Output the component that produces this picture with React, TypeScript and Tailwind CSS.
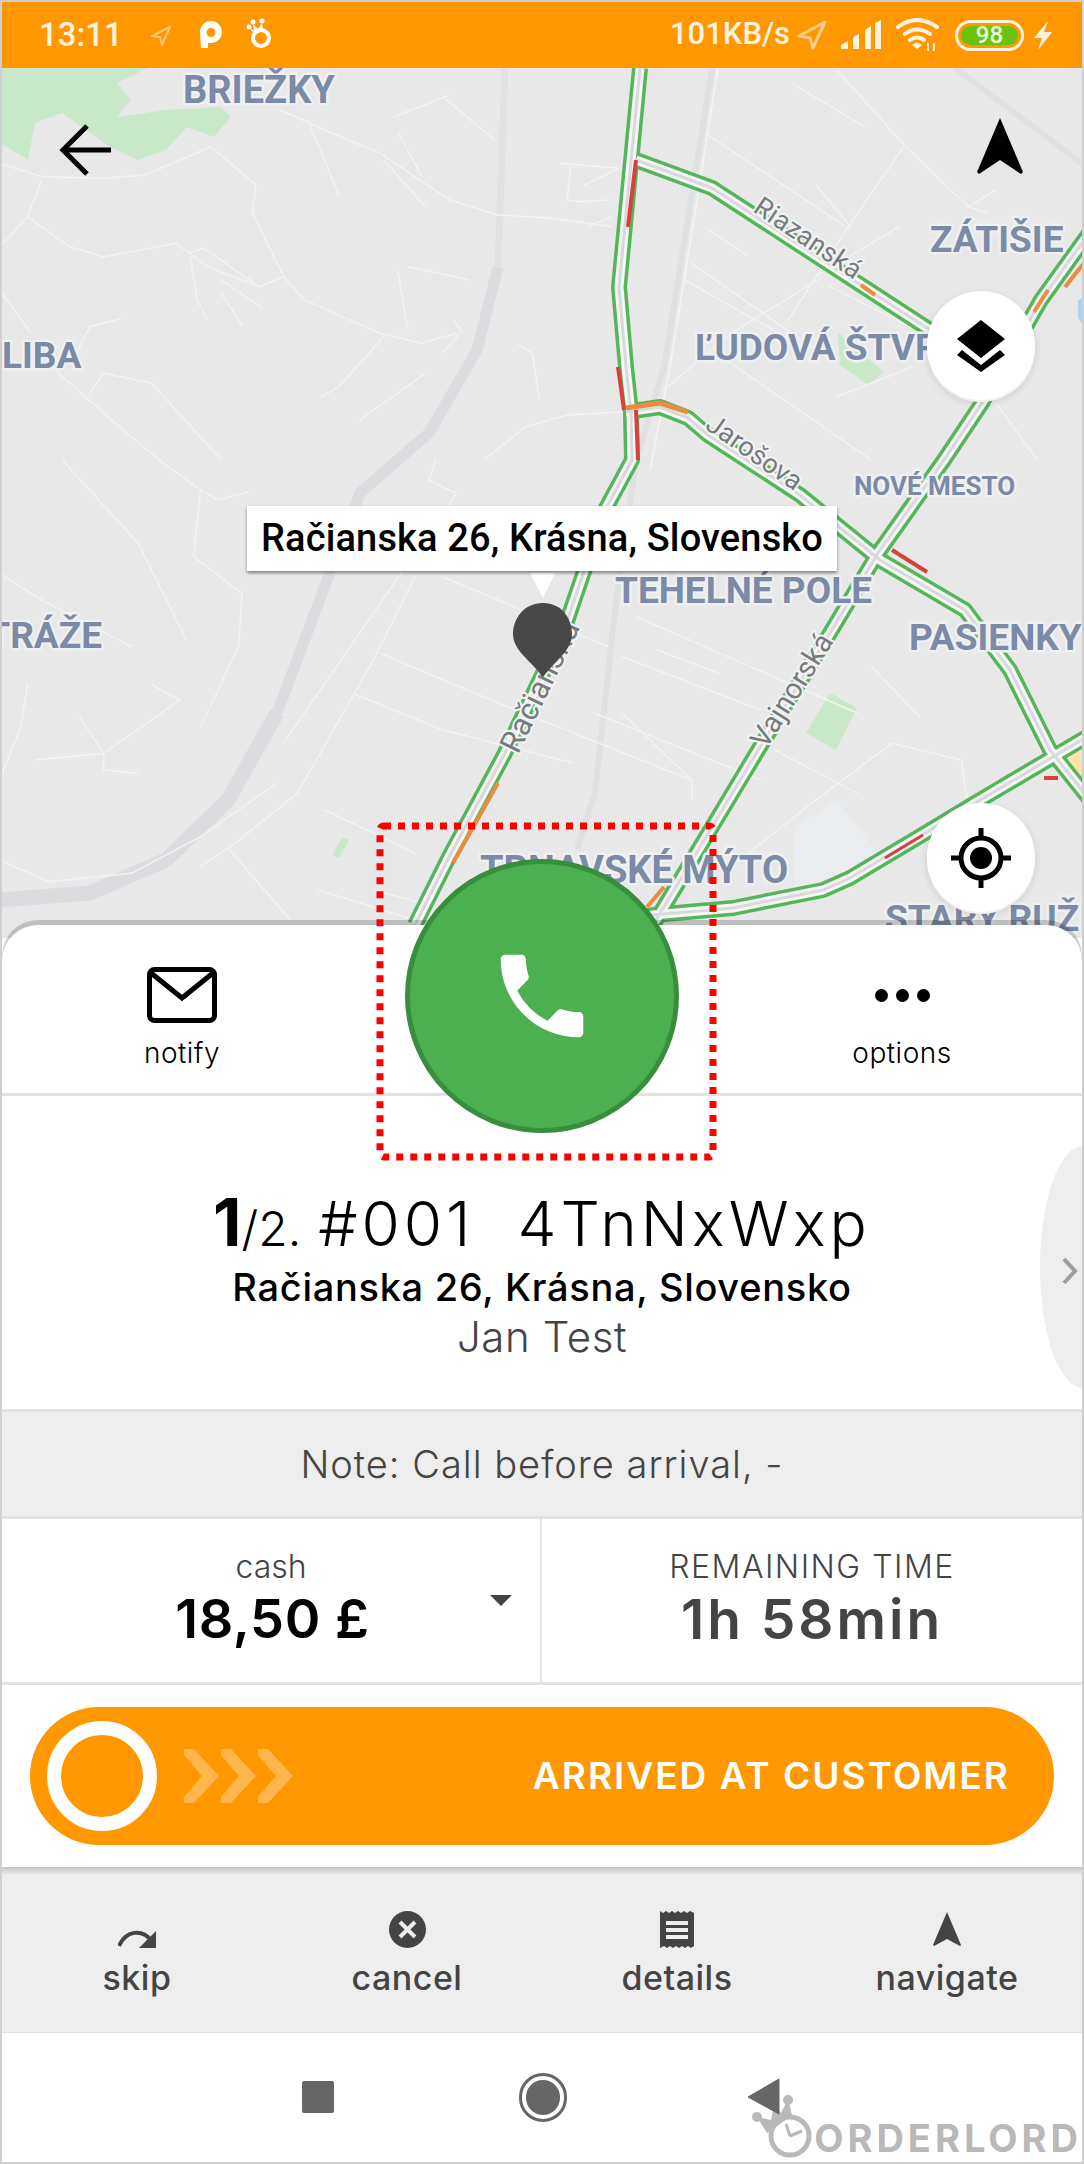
import React from "react";

type P = [number, number];
const z1 = (a: P[]) => a.map(([x, y]) => `${(x / 1.446).toFixed(1)},${(y / 3).toFixed(1)}`).join(" ");
const z2 = (a: P[]) => a.map(([x, y]) => `${(x / 1.446).toFixed(1)},${(460 + y / 3).toFixed(1)}`).join(" ");

const white1: P[][] = [
  [[405,330],[470,390],[550,460],[610,545],[650,600],[720,645],[800,655],[885,680]],
  [[445,360],[490,585]],[[575,395],[610,530]],[[555,480],[615,620]],[[650,285],[570,350]],[[640,290],[715,420]],
  [[810,490],[895,505]],[[895,505],[845,555]],[[825,500],[820,600],[840,605],[880,600]],[[885,650],[850,680]],
  [[305,440],[370,555],[365,640],[410,830],[440,900],[550,1000],[610,1030],[660,1000]],
  [[305,440],[210,525],[150,535],[60,530],[0,490]],
  [[40,650],[100,740],[150,770],[255,730],[300,800],[375,860],[410,830]],
  [[270,760],[295,745],[375,860]],[[275,770],[285,900],[300,960]],[[320,840],[380,925]],[[320,880],[350,975]],
  [[40,650],[0,740]],[[60,540],[40,650]],[[0,870],[45,1000]],[[175,955],[130,980],[110,1060]],
  [[80,1110],[150,1240],[230,1380]],[[150,1120],[220,1150],[250,1220],[320,1380]],[[150,1120],[130,1180]],
  [[555,1010],[490,1160],[465,1190]],[[665,1000],[640,1060]],[[655,960],[670,1000]],[[575,810],[590,990]],[[590,800],[680,840]],
  [[750,1035],[770,1060],[780,1200]],[[615,1120],[520,1260]],[[905,1235],[820,1245],[760,1280],[700,1380]],
  [[1210,210],[1310,440],[1400,620]],[[1020,400],[1230,690]],[[1025,690],[1080,765]],[[1145,250],[1250,380]],
  [[1305,445],[1220,700],[1140,960]],[[1180,555],[1230,680]],[[1000,790],[1200,1080]],[[990,840],[1170,1050]],
  [[1190,830],[1050,1010],[960,1170]],[[1050,1080],[1260,1380]],[[1440,1210],[1500,1380]],[[1200,860],[1430,1100]],
  [[1300,680],[1180,830]],[[1440,570],[1400,620],[1430,640]],[[1320,1100],[1210,1190]],
];
const white2: P[][] = [
  [[230,0],[290,90],[280,290],[350,400],[345,560],[290,800]],[[90,0],[200,250],[270,540]],[[0,340],[60,420],[190,560]],
  [[315,120],[360,95]],[[290,90],[315,120]],[[660,100],[620,60],[630,0]],[[660,100],[520,520],[410,850]],
  [[600,350],[540,600],[430,1000],[340,1150],[290,1220]],[[510,700],[640,810],[830,910]],[[550,580],[710,720],[1000,960]],
  [[640,350],[880,560]],[[920,470],[1240,760]],[[860,760],[1100,960]],[[950,570],[1040,640]],[[900,590],[1100,750]],
  [[40,670],[30,800],[0,960]],[[115,770],[150,880],[50,900]],[[220,675],[260,720],[150,880]],[[150,880],[150,930],[200,940]],
  [[0,1200],[70,1265],[190,1240],[290,1130],[400,970]],[[330,1165],[420,1380]],[[470,1050],[600,1180]],[[540,1290],[610,1330]],
  [[460,1290],[600,1380]],[[1070,1200],[1180,1020],[1290,850],[1390,900],[1400,1040]],[[1120,870],[1240,1000]],
  [[900,760],[1000,960],[1000,1020]],[[1260,620],[1330,770]],
];

const roads = [
  "640,68 619,287 626,367 631,413 632,460 605,510 565,627 505,753 449,857 415,925",
  "636,160 712,188 930,330",
  "1090,232 1041,300 982,403 944,460 878,553 830,633 760,747 712,827 653,925",
  "626,412 660,407 688,418 708,435 800,495 880,560 965,610 1010,670 1050,750 1090,800",
  "600,925 653,915 733,908 823,890 850,878 927,832 975,803 1090,735",
];
const segs: [string, string, number][] = [
  ["636,160 628,227", "#d8403a", 4],["618,367 624,410", "#d8403a", 4],["636,410 638,460", "#d8403a", 4],
  ["498,783 453,863", "#e98c3f", 4],["664,887 647,907", "#e98c3f", 4],["626,408 660,403 688,412", "#e98c3f", 5],
  ["861,285 875,295", "#e98c3f", 4],["1048,290 1034,312", "#e98c3f", 4],["1084,263 1065,287", "#e98c3f", 4],
  ["892,550 927,572", "#d8403a", 4],["1044,778 1058,778", "#d8403a", 4],["885,858 923,835", "#d8403a", 3],
];

const Place = ({ x, y, s = 37, a, children }: { x: number; y: number; s?: number; a?: "end"; children: string }) => (
  <text x={x} y={y} fontSize={s} textAnchor={a} className="font-bold" fill="#7b8aa5" stroke="#f0f0f2" strokeWidth={5} strokeLinejoin="round" paintOrder="stroke" style={{ fontFamily: "Roboto, sans-serif" }}>
    {children}
  </text>
);
const Street = ({ x, y, r, s = 27, children }: { x: number; y: number; r: number; s?: number; children: string }) => (
  <text transform={`translate(${x} ${y}) rotate(${r})`} fontSize={s} fill="#767b80" stroke="#f3f3f3" strokeWidth={4} strokeLinejoin="round" paintOrder="stroke" style={{ fontFamily: "Roboto, sans-serif" }}>
    {children}
  </text>
);

function MapCanvas() {
  return (
    <svg viewBox="0 68 1084 870" className="absolute left-[-2px] top-0 w-[1084px] h-[870px]">
      <rect x="0" y="68" width="1084" height="870" fill="#e8e8e8" />
      <polygon points="0,68 148,68 117,83 131,100 117,117 166,110 221,107 231,117 214,137 187,127 166,150 138,160 110,147 62,113 35,123 28,160 0,143" fill="#c9e8c9" />
      <polygon points="838,333 884,372 868,385 840,365" fill="#c9e8c9" />
      <polygon points="830,693 857,708 836,750 806,733" fill="#c9e8c9" />
      <polygon points="342,837 349,840 339,858 332,855" fill="#c9e8c9" />
      <polygon points="795,827 837,800 878,853 850,890 795,890" fill="#e9edf0" />
      <polygon points="1078,300 1084,298 1084,326 1078,318" fill="#a9d3f0" />
      <polyline points="505,68 498,267" fill="none" stroke="#e0e1e3" strokeWidth="7" />
      <polyline points="498,267 477,350 429,433 360,493 277,713" fill="none" stroke="#dadcdf" strokeWidth="11" />
      <polyline points="277,713 228,800 166,860 90,893 0,900" fill="none" stroke="#dadcdf" strokeWidth="15" />
      <polyline points="712,68 691,200 664,367 636,460 615,610 595,793 577,850" fill="none" stroke="#dfe0e2" strokeWidth="6" />
      <polyline points="955,68 1084,165" fill="none" stroke="#dfe0e2" strokeWidth="6" />
      <polyline points="718,68 697,200 670,367 650,470" fill="none" stroke="#f5f5f5" strokeWidth="1.5" />
      {white1.map((p, i) => <polyline key={i} points={z1(p)} fill="none" stroke="#f3f3f3" strokeWidth="1.5" />)}
      {white2.map((p, i) => <polyline key={i} points={z2(p)} fill="none" stroke="#f3f3f3" strokeWidth="1.5" />)}
      <polyline points="1072,745 1084,790" fill="none" stroke="#fbe4a6" strokeWidth="10" />
      {roads.map((r, i) => <polyline key={i} points={r} fill="none" stroke="#55b55a" strokeWidth="16" strokeLinejoin="round" />)}
      {roads.map((r, i) => <polyline key={i} points={r} fill="none" stroke="#f6f6f6" strokeWidth="9" strokeLinejoin="round" />)}
      {roads.map((r, i) => <polyline key={i} points={r} fill="none" stroke="#d8d9db" strokeWidth="3" strokeLinejoin="round" />)}
      {segs.map(([p, c, w], i) => <polyline key={i} points={p} fill="none" stroke={c} strokeWidth={w} />)}
      <Place x={183} y={103} s={38}>BRIEŽKY</Place>
      <Place x={930} y={252}>ZÁTIŠIE</Place>
      <Place x={695} y={360}>ĽUDOVÁ ŠTVRŤ</Place>
      <Place x={2} y={368}>LIBA</Place>
      <Place x={102} y={648} a="end">TRÁŽE</Place>
      <Place x={615} y={603}>TEHELNÉ POLE</Place>
      <Place x={909} y={650}>PASIENKY</Place>
      <Place x={854} y={495} s={26}>NOVÉ MESTO</Place>
      <Place x={480} y={883} s={38}>TRNAVSKÉ MÝTO</Place>
      <Place x={885} y={931}>STARÝ RUŽINOV</Place>
      <Street x={752} y={211} r={34}>Riazanská</Street>
      <Street x={704} y={428} r={35}>Jarošova</Street>
      <Street x={766} y={750} r={-58} s={29}>Vajnorská</Street>
      <Street x={518} y={755} r={-64} s={31}>Račianska</Street>
      <path d="M530 573 L555 573 L543 598 Z" fill="#fff" />
      <path d="M543 603 C563 603 572 620 572 634 C572 650 556 660 543 677 C530 660 513 650 513 634 C513 620 523 603 543 603 Z" fill="#484848" />
    </svg>
  );
}

const Glow = "bg-white rounded-full w-[108px] h-[109px] flex items-center justify-center shadow-[0_2px_0_#f1f1f1,0_3px_8px_rgba(0,0,0,0.12)]";

export default function App() {
  const mont = { fontFamily: "Inter, 'Noto Sans', sans-serif" };
  return (
    <div className="relative w-[1084px] h-[2164px] border-2 border-[#cfcfcf] bg-white overflow-hidden box-border" style={mont}>
      {/* status bar */}
      <div className="relative z-10 h-[66px] bg-[#ff9800] flex items-center text-[#fff3e0] pl-[37px]" style={{ fontFamily: "Roboto, sans-serif" }}>
        <span className="text-[33px] font-medium w-[100px] mt-[-1px]">13:11</span>
        <svg width="20" height="20" viewBox="0 0 20 20" className="ml-[12px] mt-[2px]"><path d="M19 1 L1 10 L9 11 L11 19 Z" fill="none" stroke="#ffc675" strokeWidth="2" strokeLinejoin="round" /></svg>
        <svg width="24" height="28" viewBox="0 0 24 28" className="ml-[28px]"><path fillRule="evenodd" d="M1 11 A11 11 0 1 1 12 22 L9 22 L9 27 L2 27 Z M12 7 A4.5 4.5 0 1 0 12.01 16 A4.5 4.5 0 0 0 12 7 Z" fill="#fff" /></svg>
        <svg width="28" height="30" viewBox="0 0 28 30" className="ml-[23px] mt-[-4px]"><circle cx="15" cy="20" r="8" fill="none" stroke="#fff" strokeWidth="4" /><path d="M3 9 L8 13 L7 6 L12 11 L16 5 L17 12 L9 17 Z" fill="#fff" /><circle cx="3" cy="9" r="2.5" fill="#fff" /><circle cx="7" cy="4" r="2.5" fill="#fff" /><circle cx="16" cy="3" r="2.5" fill="#fff" /></svg>
        <span className="ml-auto text-[31px] font-medium w-[127px] mt-[-1px]">101KB/s</span>
        <svg width="30" height="30" viewBox="0 0 30 30"><path d="M28 2 L2 16 L13 18 L16 28 Z" fill="none" stroke="#ffcf8c" strokeWidth="3" strokeLinejoin="round" /></svg>
        <svg width="40" height="30" viewBox="0 0 40 30" className="ml-[14px]"><path d="M0 29 L0 25 L7 21 L7 29 Z M12 29 L12 17 L18 14 L18 29 Z M24 29 L24 10 L30 6 L30 29 Z M34 29 L34 3 L40 0 L40 29 Z" fill="#fff3e0" /></svg>
        <svg width="44" height="34" viewBox="0 0 44 34" className="ml-[15px]"><path d="M2 9 Q21 -5 41 9 M9 16 Q21 7 34 16 M14 22 Q21 17 28 22" fill="none" stroke="#fff3e0" strokeWidth="4" strokeLinecap="round" /><path d="M16 27 L21 24 L26 27 L21 31 Z" fill="#fff3e0" /><path d="M32 33 L32 25 M38 33 L38 25" stroke="#fff3e0" strokeWidth="2" /></svg>
        <div className="ml-[15px] w-[69px] h-[31px] rounded-full border-[3px] border-[#fff3e0] p-[3px] flex">
          <div className="flex-1 rounded-full bg-[#6cc10f] flex items-center justify-center text-[24px] leading-none font-medium text-[#eaffd9]">98</div>
        </div>
        <svg width="20" height="29" viewBox="0 0 20 29" className="ml-[9px] mr-[29px]"><path d="M15 0 L1 17 L9 17 L5 29 L19 11 L11 11 Z" fill="#fff3e0" /></svg>
      </div>

      {/* map */}
      <div className="relative h-[870px] overflow-hidden">
        <MapCanvas />
        <svg width="54" height="52" viewBox="0 0 54 52" className="absolute left-[57px] top-[56px]"><path d="M52 26 L6 26 M28 2 L4 26 L28 50" fill="none" stroke="#000" strokeWidth="5" /></svg>
        <svg width="48" height="58" viewBox="0 0 48 58" className="absolute left-[974px] top-[50px]"><path d="M24 0 L47 54 L45 56 L24 42 L3 56 L1 54 Z" fill="#000" /></svg>
        <div className="absolute left-[245px] top-[438px] w-[590px] h-[65px] bg-white shadow-[0_2px_3px_rgba(0,0,0,0.45)] flex items-center justify-center text-[38px] font-medium text-black tracking-[0.15px]" style={{ fontFamily: "Roboto, sans-serif" }}>
          Račianska 26, Krásna, Slovensko
        </div>
        <div className={`${Glow} absolute left-[925px] top-[223px]`}>
          <svg width="48" height="52" viewBox="0 0 48 52"><path d="M24 0 L48 19 L24 38 L0 19 Z M0 35 L5 30 L24 45 L43 30 L48 35 L24 52 Z" fill="#000" /></svg>
        </div>
        <div className={`${Glow} absolute left-[925px] top-[735px]`}>
          <svg width="62" height="62" viewBox="0 0 62 62"><circle cx="31" cy="31" r="20" fill="none" stroke="#000" strokeWidth="5" /><circle cx="31" cy="31" r="11" fill="#000" /><path d="M31 1 L31 11 M31 51 L31 61 M1 31 L11 31 M51 31 L61 31" stroke="#000" strokeWidth="5" /></svg>
        </div>
      </div>

      {/* panel */}
      <div className="relative mt-[-13px] rounded-t-[36px] bg-white shadow-[0_-5px_0_rgba(0,0,0,0.18)]">
        <div className="grid grid-cols-3 h-[171px] border-b-[3px] border-[#e2e2e2] text-black">
          <div className="flex flex-col items-center pt-[42px]">
            <svg width="70" height="56" viewBox="0 0 70 56"><rect x="2.5" y="2.5" width="65" height="51" rx="5" fill="none" stroke="#000" strokeWidth="5" /><path d="M4 6 L35 31 L66 6" fill="none" stroke="#000" strokeWidth="5" /></svg>
            <span className="mt-[15px] text-[28px] leading-[30px] font-light tracking-[0.5px]">notify</span>
          </div>
          <div />
          <div className="flex flex-col items-center pt-[42px]">
            <div className="h-[56px] flex items-center gap-[8px]">
              <div className="w-[13px] h-[13px] rounded-full bg-black" /><div className="w-[13px] h-[13px] rounded-full bg-black" /><div className="w-[13px] h-[13px] rounded-full bg-black" />
            </div>
            <span className="mt-[15px] text-[28px] leading-[30px] font-light tracking-[0.5px]">options</span>
          </div>
        </div>

        <div className="relative h-[316px] border-b-[3px] border-[#e2e2e2] overflow-hidden flex flex-col items-center pt-[91px]">
          <div className="flex items-baseline text-black font-light text-[62px] leading-[70px]">
            <span className="font-bold text-[66px]">1</span>
            <span className="text-[48px] mr-[17px]">/2.</span>
            <span className="tracking-[4px]">#001&nbsp;&nbsp;4TnNxWxp</span>
          </div>
          <div className="text-[38px] leading-[44px] font-medium text-black mt-[1px] tracking-[0.7px]">Račianska 26, Krásna, Slovensko</div>
          <div className="text-[42px] leading-[50px] font-light text-[#444] mt-[3px] tracking-[0.6px]">Jan Test</div>
          <div className="absolute right-[-44px] top-[50px] w-[86px] h-[242px] rounded-[50%] bg-[#eeeeee]" />
          <svg width="16" height="28" viewBox="0 0 16 28" className="absolute left-[1060px] top-[161px]"><path d="M2 2 L13 14 L2 26" fill="none" stroke="#9e9e9e" strokeWidth="4" /></svg>
        </div>

        <div className="h-[107px] border-b-[3px] border-[#e2e2e2] bg-[#eeeeee] flex items-center justify-center text-[38px] font-light text-[#444] tracking-[1px]">
          Note: Call before arrival, -
        </div>

        <div className="grid grid-cols-2 h-[166px] border-b-[3px] border-[#e2e2e2]">
          <div className="relative flex flex-col items-center border-r-2 border-[#e2e2e2] pt-[28px]">
            <span className="text-[32px] leading-[40px] font-light text-[#444]">cash</span>
            <span className="text-[54px] leading-[64px] font-semibold text-black tracking-[0.6px] ml-[3px]">18,50 £</span>
            <svg width="22" height="11" viewBox="0 0 22 11" className="absolute left-[488px] top-[76px]"><path d="M0 0 L22 0 L11 11 Z" fill="#444" /></svg>
          </div>
          <div className="flex flex-col items-center pt-[28px]">
            <span className="text-[32px] leading-[40px] font-light text-[#444] tracking-[1.5px]">REMAINING TIME</span>
            <span className="text-[55px] leading-[64px] font-semibold text-[#444] tracking-[3px]">1h 58min</span>
          </div>
        </div>

        <div className="h-[182px] pt-[22px] px-[28px]">
          <div className="h-[138px] rounded-full bg-[#ff9800] flex items-center pl-[17px] pr-[44px]">
            <div className="w-[110px] h-[110px] rounded-full border-[14px] border-white" />
            <svg width="110" height="54" viewBox="0 0 110 54" className="ml-[27px]">
              <path d="M0 0 L10 0 L35 27 L10 54 L0 54 L0 48 L18 27 L0 6 Z" fill="#ffb64d" />
              <path d="M37 0 L47 0 L72 27 L47 54 L37 54 L37 48 L55 27 L37 6 Z" fill="#ffb64d" />
              <path d="M74 0 L84 0 L109 27 L84 54 L74 54 L74 48 L92 27 L74 6 Z" fill="#ffb64d" />
            </svg>
            <span className="ml-auto text-[37px] font-semibold text-white tracking-[2px]">ARRIVED AT CUSTOMER</span>
          </div>
        </div>
      </div>

      {/* action bar */}
      <div className="relative grid grid-cols-4 h-[166px] bg-[#eeeeee] border-b border-[#e2e2e2] text-[#444] text-[34px] font-medium tracking-[0.5px]">
        <div className="absolute inset-x-0 top-0 h-[8px] bg-gradient-to-b from-[#c4c4c4] to-[#eeeeee]" />
        <div className="flex flex-col items-center pt-[44px]">
          <div className="h-[37px] flex items-end">
            <svg width="38" height="19" viewBox="0 0 38 19"><path d="M1 17 C8 1 24 0 33 11" fill="none" stroke="#444" strokeWidth="4" /><path d="M38 2 L38 19 L21 19 Z" fill="#444" /></svg>
          </div>
          <span className="mt-[9px] leading-[42px]">skip</span>
        </div>
        <div className="flex flex-col items-center pt-[44px]">
          <svg width="37" height="37" viewBox="0 0 37 37"><circle cx="18.5" cy="18.5" r="18.5" fill="#444" /><path d="M11 11 L26 26 M26 11 L11 26" stroke="#eee" strokeWidth="4" /></svg>
          <span className="mt-[9px] leading-[42px]">cancel</span>
        </div>
        <div className="flex flex-col items-center pt-[44px]">
          <svg width="34" height="37" viewBox="0 0 34 37"><path d="M0 0 L3 2 L6 0 L9 2 L12 0 L15 2 L18 0 L21 2 L24 0 L27 2 L30 0 L34 2 L34 35 L31 37 L28 35 L25 37 L22 35 L19 37 L16 35 L13 37 L10 35 L7 37 L4 35 L0 37 Z" fill="#444" /><path d="M6 10 H28 V14 H6 Z M6 17 H28 V21 H6 Z M6 24 H28 V28 H6 Z" fill="#eee" /></svg>
          <span className="mt-[9px] leading-[42px]">details</span>
        </div>
        <div className="flex flex-col items-center pt-[44px]">
          <svg width="28" height="37" viewBox="0 0 28 37"><path d="M14 1 L28 34 L27 35 L14 28 L1 35 L0 34 Z" fill="#444" /></svg>
          <span className="mt-[9px] leading-[42px]">navigate</span>
        </div>
      </div>

      {/* watermark */}
      <div className="absolute right-0 bottom-[3px] flex items-end">
        <svg width="62" height="68" viewBox="0 0 62 68">
          <circle cx="40" cy="45" r="19" fill="#fff" stroke="#b9b9b9" strokeWidth="5" />
          <path d="M40 45 L36 33 M40 45 L52 40" stroke="#b9b9b9" strokeWidth="3" />
          <path d="M7 26 L21 29 L24 14 L31 22 L38 8 L42 24 L26 36 L17 42 Z" fill="#b9b9b9" />
          <circle cx="7" cy="26" r="5" fill="#b9b9b9" /><circle cx="22" cy="14" r="5" fill="#b9b9b9" /><circle cx="38" cy="9" r="5" fill="#b9b9b9" />
        </svg>
        <span className="text-[38px] leading-[42px] font-bold text-[#b9b9b9] ml-[2px] tracking-[4px]">ORDERLORD</span>
      </div>

      {/* system nav */}
      <div className="flex items-center justify-center h-[129px] relative">
        <div className="absolute left-[300px] top-[48px] w-[32px] h-[32px] rounded-[2px] bg-[#666]" />
        <div className="absolute left-[517px] top-[40px] w-[48px] h-[49px] rounded-full border-[3px] border-[#666] p-[4px]">
          <div className="w-full h-full rounded-full bg-[#666]" />
        </div>
        <svg width="33" height="37" viewBox="0 0 33 37" className="absolute left-[745px] top-[45px]"><path d="M32 1 L32 36 L1 19 Z" fill="#666" stroke="#666" strokeWidth="1" strokeLinejoin="round" /></svg>
      </div>

      {/* annotation and call button */}
      <div className="absolute left-[403px] top-[857px] w-[274px] h-[274px] rounded-full bg-[#4caf50] border-[5px] border-[#388e3c] flex items-center justify-center">
        <svg width="110" height="110" viewBox="0 0 24 24"><path d="M6.62 10.79c1.44 2.83 3.76 5.14 6.59 6.59l2.2-2.2c.27-.27.67-.36 1.02-.24 1.12.37 2.33.57 3.57.57.55 0 1 .45 1 1V20c0 .55-.45 1-1 1-9.39 0-17-7.61-17-17 0-.55.45-1 1-1h3.5c.55 0 1 .45 1 1 0 1.25.2 2.45.57 3.57.11.35.03.74-.25 1.02l-2.2 2.2z" fill="#fff" /></svg>
      </div>
      <svg width="345" height="345" viewBox="0 0 345 345" className="absolute left-[372px] top-[818px] pointer-events-none">
        <rect x="6" y="6" width="333" height="331" rx="4" fill="none" stroke="#ff0000" strokeWidth="7" strokeDasharray="7 7" />
      </svg>
    </div>
  );
}
